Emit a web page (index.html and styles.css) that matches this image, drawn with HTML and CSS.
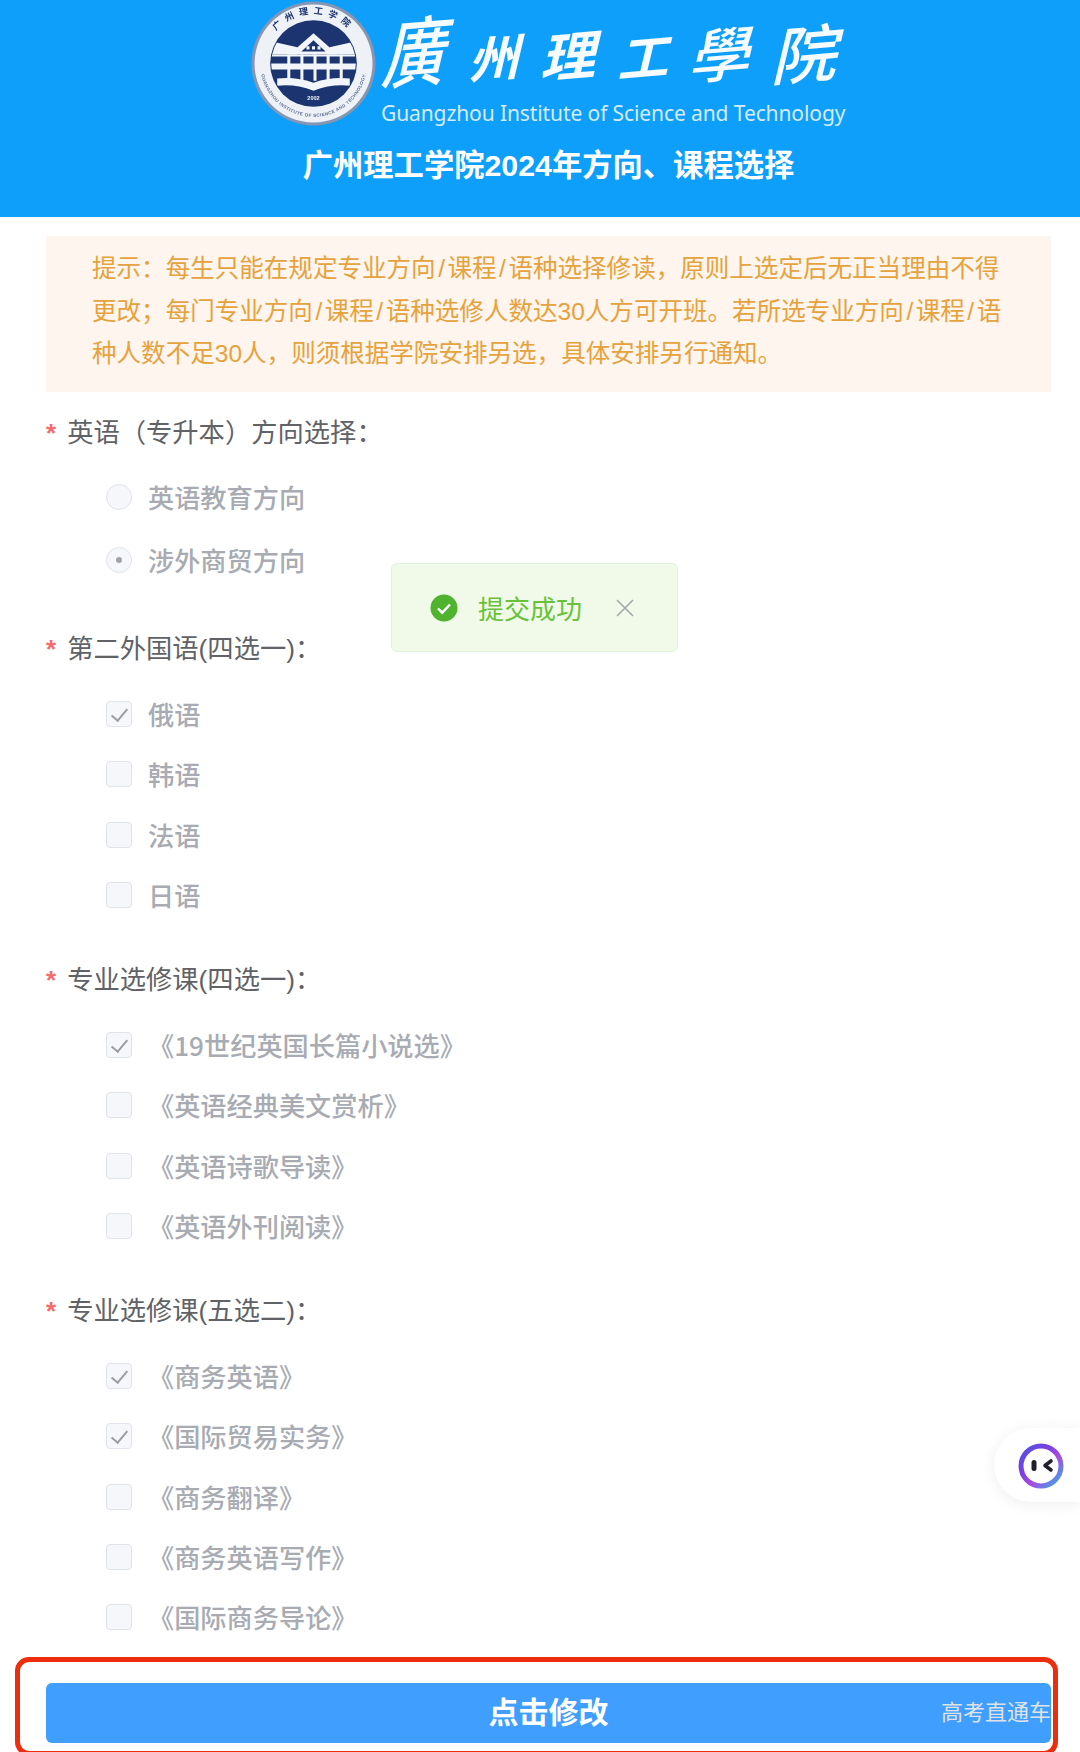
FILE: index.html
```html
<!DOCTYPE html>
<html lang="zh-CN">
<head>
<meta charset="utf-8">
<title>广州理工学院2024年方向、课程选择</title>
<link rel="stylesheet" href="styles.css">
</head>
<body>
<header class="hero">
  <div class="brand">
    <svg class="seal" viewBox="0 0 124 124" aria-hidden="true">
      <defs><path id="sealTop" d="M13 62a49 49 0 0 1 98 0"/><path id="sealBottom" d="M9 62a53 53 0 0 0 106 0"/>
      <clipPath id="sealClip"><circle cx="62" cy="62" r="42"/></clipPath></defs>
      <circle cx="62" cy="62" r="61.500" fill="#8496b4"/>
      <circle cx="62" cy="62" r="58.500" fill="#eef2f6"/>
      <circle cx="62" cy="62" r="43" fill="#1c3570"/>
      <text class="seal-top"><textPath href="#sealTop" startOffset="50%" text-anchor="middle">广州理工学院</textPath></text>
      <text class="seal-bottom"><textPath href="#sealBottom" startOffset="50%" text-anchor="middle">GUANGZHOU INSTITUTE OF SCIENCE AND TECHNOLOGY</textPath></text>
      <g clip-path="url(#sealClip)" fill="#f2f5fa">
        <path d="M62 32L86 53H38z"/>
        <path d="M24 41L46 46V53H20zM100 41L78 46V53H104z"/>
        <path d="M18 53h88v2H18zM18 62h88v6H18z"/>
        <path d="M36 53h3v26h-3zM49 53h3v26h-3zM62 53h3v26h-3zM75 53h3v26h-3zM88 53h3v26h-3z"/>
        <path d="M26 77q18-2 36 4q18-6 36-4v7q-18-2-36 5q-18-7-36-5z"/>
      </g>
      <path d="M62 39L74 50H50z" fill="#1c3570"/>
      <path d="M55 45h3v3h-3zM60.500 45h3v3h-3zM66 45h3v3h-3z" fill="#f2f5fa"/>
      <text class="seal-year" x="62" y="98" text-anchor="middle">2002</text>
    </svg>
    <div class="brand-names">
      <div class="brush">
        <span class="brush-1">廣</span><span class="brush-2">州</span><span class="brush-3">理</span><span class="brush-4">工</span><span class="brush-5">學</span><span class="brush-6">院</span>
      </div>
      <div class="brand-en">Guangzhou Institute of Science and Technology</div>
    </div>
  </div>
  <h1 class="hero-title">广州理工学院2024年方向、课程选择</h1>
</header>

<main class="form">
  <p class="notice">提示：每生只能在规定专业方向<span class="slash">/</span>课程<span class="slash">/</span>语种选择修读，原则上选定后无正当理由不得<br>更改；每门专业方向<span class="slash">/</span>课程<span class="slash">/</span>语种选修人数达30人方可开班。若所选专业方向<span class="slash">/</span>课程<span class="slash">/</span>语<br>种人数不足30人，则须根据学院安排另选，具体安排另行通知。</p>

  <section class="group group-radio">
    <h2 class="label">英语（专升本）方向选择：</h2>
    <div class="option"><span class="radio"></span>英语教育方向</div>
    <div class="option"><span class="radio is-on"></span>涉外商贸方向</div>
  </section>

  <section class="group">
    <h2 class="label">第二外国语(四选一)：</h2>
    <div class="option"><span class="check is-on"></span>俄语</div>
    <div class="option"><span class="check"></span>韩语</div>
    <div class="option"><span class="check"></span>法语</div>
    <div class="option"><span class="check"></span>日语</div>
  </section>

  <section class="group">
    <h2 class="label">专业选修课(四选一)：</h2>
    <div class="option"><span class="check is-on"></span>《19世纪英国长篇小说选》</div>
    <div class="option"><span class="check"></span>《英语经典美文赏析》</div>
    <div class="option"><span class="check"></span>《英语诗歌导读》</div>
    <div class="option"><span class="check"></span>《英语外刊阅读》</div>
  </section>

  <section class="group group-last">
    <h2 class="label">专业选修课(五选二)：</h2>
    <div class="option"><span class="check is-on"></span>《商务英语》</div>
    <div class="option"><span class="check is-on"></span>《国际贸易实务》</div>
    <div class="option"><span class="check"></span>《商务翻译》</div>
    <div class="option"><span class="check"></span>《商务英语写作》</div>
    <div class="option"><span class="check"></span>《国际商务导论》</div>
  </section>

  <div class="action">
    <button class="submit" type="button">点击修改<span class="watermark">高考直通车</span></button>
  </div>
</main>

<div class="toast">
  <svg class="toast-icon" viewBox="0 0 28 28" aria-hidden="true"><circle cx="14" cy="14" r="13.500" fill="#4fb32f"/><path d="M8 14.500l4.200 4.200L20 10.500" fill="none" stroke="#fff" stroke-width="2.400"/></svg>
  <span class="toast-text">提交成功</span>
  <svg class="toast-close" viewBox="0 0 20 20" aria-hidden="true"><path d="M2 2l16 16M18 2L2 18" stroke="#a4a7ad" stroke-width="1.600" fill="none"/></svg>
</div>

<div class="assistant">
  <svg viewBox="0 0 46 46" class="assistant-icon" aria-hidden="true">
    <defs><linearGradient id="ring" x1="0" y1="0" x2="1" y2="1"><stop offset="0" stop-color="#4f55e0"/><stop offset=".35" stop-color="#7a3fe0"/><stop offset=".6" stop-color="#a94be0"/><stop offset="1" stop-color="#2fb0e8"/></linearGradient></defs>
    <circle cx="23" cy="23" r="20" fill="#fff" stroke="url(#ring)" stroke-width="5"/>
    <rect x="13.500" y="17" width="5" height="11" rx="2.500" fill="#20202a"/>
    <path d="M33 18l-6 4.500 6 4.500" fill="none" stroke="#20202a" stroke-width="3.600" stroke-linecap="round" stroke-linejoin="round"/>
  </svg>
</div>
</body>
</html>
```

FILE: styles.css
```css
* { box-sizing: border-box; }
html, body { margin: 0; height: 1752px; overflow: hidden; }
body {
  position: relative;
  background: #fff;
  font-family: "Liberation Sans", "Noto Sans CJK SC", sans-serif;
}

/* header */
.hero {
  height: 217px;
  padding: 1px 29px 0 46px;
  background: #0e9ffb;
  color: #fff;
  display: flex;
  flex-direction: column;
  align-items: center;
}
.brand { display: flex; gap: 5px; height: 127px; }
.seal { width: 125px; height: 125px; flex: none; filter: blur(.5px); }
.seal-top { font-family: "Noto Sans CJK SC", sans-serif; font-size: 9px; font-weight: 700; fill: #1c3570; letter-spacing: 5px; }
.seal-bottom { font-size: 4.500px; font-weight: 700; fill: #5c6f96; letter-spacing: .4px; }
.seal-year { font-size: 5.500px; font-weight: 700; fill: #f2f5fa; }
.brand-names { width: 465px; display: flex; flex-direction: column; }
.brush {
  height: 100px;
  padding: 0 4px 0 8px;
  display: flex;
  align-items: center;
  justify-content: space-between;
  font-family: "Noto Sans CJK SC", sans-serif;
  font-weight: 500;
  line-height: 1;
  color: #f6fbff;
  filter: blur(.5px);
}
.brush span { display: block; transform: skewX(-18deg) rotate(-5deg); }
.brush .brush-1 { font-size: 62px; margin-top: -8px; transform: skewX(-18deg) rotate(-5deg) scaleY(1.25); }
.brush-2 { font-size: 50px; margin-top: 8px; font-weight: 700; }
.brush-3 { font-size: 54px; margin-top: 4px; font-weight: 700; }
.brush-4 { font-size: 50px; margin-top: 6px; font-weight: 700; }
.brush-5 { font-size: 60px; margin-top: 0; }
.brush-6 { font-size: 64px; margin-top: -2px; }
.brand-en {
  font-family: "Noto Sans", "Liberation Sans", sans-serif;
  font-size: 21px;
  line-height: 24px;
  letter-spacing: -.1px;
  white-space: nowrap;
  color: #d5ebfb;
}
.hero-title {
  margin: 17px 0 0;
  font-size: 30.300px;
  line-height: 42px;
  font-weight: 700;
  white-space: nowrap;
}

/* form */
.form { padding: 19px 29px 0 46px; }
.notice {
  margin: 0;
  height: 156px;
  padding: 12px 20px 0 46px;
  background: #fdf5ee;
  color: #e6a23c;
  font-size: 24.550px;
  line-height: 42.500px;
  white-space: nowrap;
}
.slash { margin: 0 2.500px; }
.group { padding-bottom: 35px; }
.group-radio { padding-top: 21px; padding-bottom: 38px; }
.group-last { padding-bottom: 10px; }
.group-radio .option { height: 63px; }
.group-radio .label { margin-bottom: 12px; }
.label {
  margin: 0 0 15px;
  height: 40px;
  font-size: 26.300px;
  line-height: 40px;
  font-weight: 400;
  color: #606266;
  white-space: nowrap;
}
.label::before { content: "*"; color: #f56c6c; margin-right: 11px; font-size: 26px; font-weight: 700; }
.option {
  height: 60.250px;
  padding-left: 60px;
  display: flex;
  align-items: center;
  gap: 16px;
  font-family: "Noto Sans CJK SC", "Liberation Sans", sans-serif;
  font-size: 26.200px;
  font-weight: 500;
  color: #a8abb2;
  white-space: nowrap;
}
.radio, .check {
  flex: none;
  width: 26px;
  height: 26px;
  background: #f5f7fa;
  border: 1px solid #e0e3e9;
  position: relative;
}
.radio { border-radius: 50%; }
.check { border-radius: 4px; }
.radio.is-on::after {
  content: "";
  position: absolute;
  left: 9px;
  top: 9px;
  width: 6px;
  height: 6px;
  border-radius: 50%;
  background: #a0a3a9;
}
.check.is-on::after {
  content: "";
  position: absolute;
  left: 8px;
  top: 3px;
  width: 7px;
  height: 14px;
  border: solid #9a9da3;
  border-width: 0 2px 2px 0;
  transform: rotate(40deg);
}

/* action */
.action {
  margin: 0 -7px 0 -31px;
  padding: 21px 2px 8px 26px;
  border: 5px solid #ee2c0e;
  border-radius: 14px;
  background: #fff;
}
.submit {
  position: relative;
  display: block;
  width: 100%;
  height: 60px;
  border: 0;
  border-radius: 6px;
  background: #409eff;
  color: #fff;
  font: 700 30px/60px "Liberation Sans", "Noto Sans CJK SC", sans-serif;
  padding: 0;
}
.watermark {
  position: absolute;
  right: 0;
  top: 0;
  font-size: 22px;
  font-weight: 400;
  color: #dfe3e8;
}

/* overlays */
.toast {
  position: absolute;
  left: 391px;
  top: 563px;
  width: 287px;
  height: 89px;
  padding-left: 38px;
  display: flex;
  align-items: center;
  background: #f1fae9;
  border: 1px solid #e1f3d8;
  border-radius: 6px;
}
.toast-icon { width: 28px; height: 28px; flex: none; }
.toast-text { margin-left: 20px; font-size: 26px; color: #67c23a; white-space: nowrap; }
.toast-close { width: 20px; height: 20px; margin-left: 33px; flex: none; }
.assistant {
  position: absolute;
  right: 0;
  top: 1428px;
  width: 86px;
  height: 74px;
  padding: 15px 0 0 24px;
  background: #fff;
  border-radius: 37px 0 0 37px;
  box-shadow: 0 2px 16px rgba(0, 0, 0, .07);
}
.assistant-icon { display: block; width: 46px; height: 46px; }
```
